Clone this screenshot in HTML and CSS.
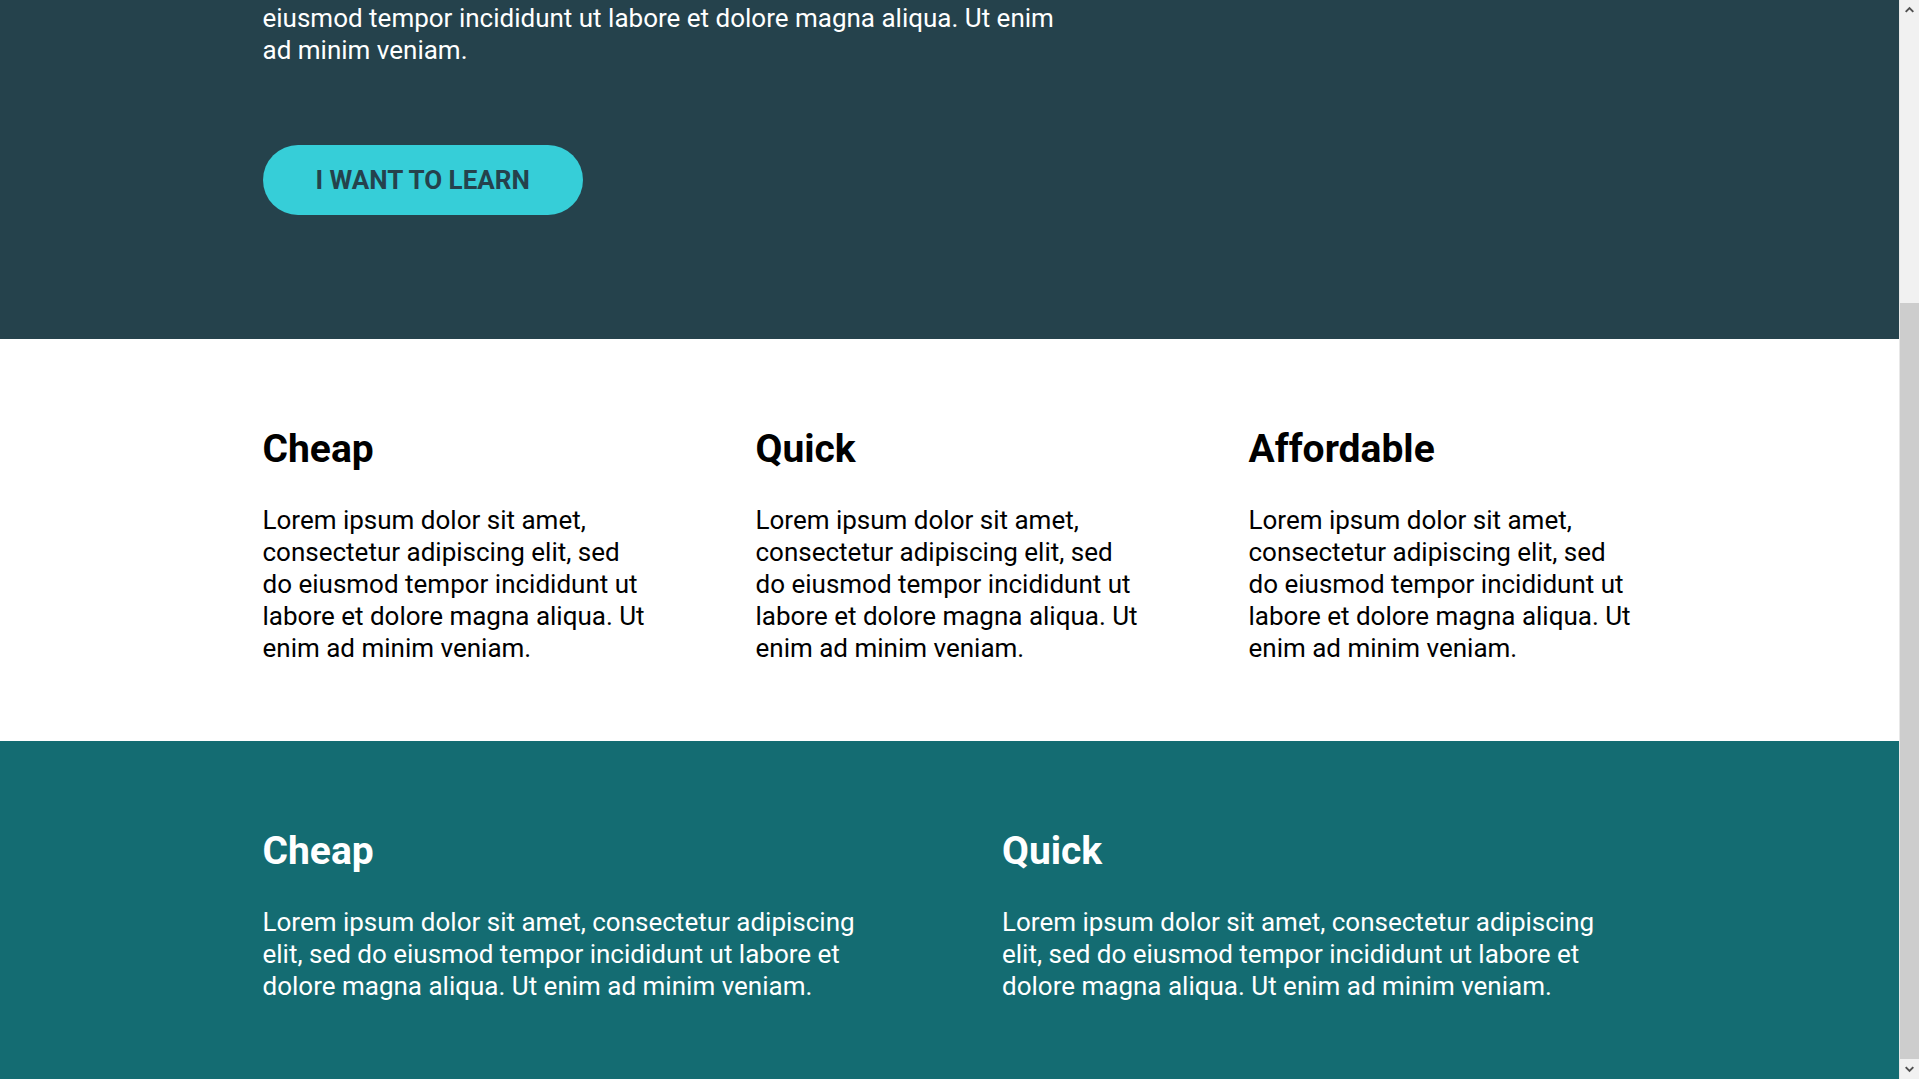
FILE: index.html
```html
<!DOCTYPE html>
<html lang="en">
<head>
<meta charset="utf-8">
<title>Learn</title>
<link rel="stylesheet" href="styles.css">
</head>
<body>
<header class="hero">
  <div class="container">
    <h1 class="hero-title">Learn to code</h1>
    <p class="hero-text">Lorem ipsum dolor sit amet, consectetur adipiscing elit, sed do eiusmod tempor incididunt ut labore et dolore magna aliqua. Ut enim ad minim veniam.</p>
    <a class="btn" href="#">I WANT TO LEARN</a>
  </div>
</header>
<section class="features">
  <div class="container grid-3">
    <div class="feature">
      <h2>Cheap</h2>
      <p>Lorem ipsum dolor sit amet, consectetur adipiscing elit, sed do eiusmod tempor incididunt ut labore et dolore magna aliqua. Ut enim ad minim veniam.</p>
    </div>
    <div class="feature">
      <h2>Quick</h2>
      <p>Lorem ipsum dolor sit amet, consectetur adipiscing elit, sed do eiusmod tempor incididunt ut labore et dolore magna aliqua. Ut enim ad minim veniam.</p>
    </div>
    <div class="feature">
      <h2>Affordable</h2>
      <p>Lorem ipsum dolor sit amet, consectetur adipiscing elit, sed do eiusmod tempor incididunt ut labore et dolore magna aliqua. Ut enim ad minim veniam.</p>
    </div>
  </div>
</section>
<section class="features features-dark">
  <div class="container grid-2">
    <div class="feature">
      <h2>Cheap</h2>
      <p>Lorem ipsum dolor sit amet, consectetur adipiscing elit, sed do eiusmod tempor incididunt ut labore et dolore magna aliqua. Ut enim ad minim veniam.</p>
    </div>
    <div class="feature">
      <h2>Quick</h2>
      <p>Lorem ipsum dolor sit amet, consectetur adipiscing elit, sed do eiusmod tempor incididunt ut labore et dolore magna aliqua. Ut enim ad minim veniam.</p>
    </div>
  </div>
</section>
<div class="scrollbar" aria-hidden="true">
  <div class="sb-arrow">
    <svg width="20" height="20" viewBox="0 0 20 20"><path d="M6 12 L10 8 L14 12" fill="none" stroke="#505050" stroke-width="2"/></svg>
  </div>
  <div class="sb-track">
    <div class="sb-thumb"></div>
  </div>
  <div class="sb-arrow">
    <svg width="20" height="20" viewBox="0 0 20 20"><path d="M6 8 L10 12 L14 8" fill="none" stroke="#505050" stroke-width="2"/></svg>
  </div>
</div>
<script src="script.js"></script>
</body>
</html>
```

FILE: styles.css
```css
* { box-sizing: border-box; }
html, body { margin: 0; padding: 0; }
body {
  font-family: Roboto, "Liberation Sans", sans-serif;
  color: #000;
  background: #fff;
  padding-right: 20px;
}
.container {
  width: 1374px;
  margin: 0 auto;
}
.hero {
  background: #25424c;
  color: #fff;
  padding: 120px 0 124px;
}
.hero-title {
  font-size: 64px;
  font-weight: 700;
  margin: 0 0 40px;
}
.hero-text {
  font-size: 26px;
  line-height: 32px;
  max-width: 810px;
  margin: 0 0 79px;
}
.btn {
  display: inline-block;
  background: #36ced8;
  color: #25424c;
  font-size: 26px;
  font-weight: 700;
  text-decoration: none;
  padding: 20px 53px;
  border-radius: 40px;
}
.features {
  padding: 87px 0 77px;
}
.features-dark {
  background: #146c72;
  color: #fff;
}
.grid-3 {
  display: grid;
  grid-template-columns: repeat(3, 1fr);
  column-gap: 105px;
}
.grid-2 {
  display: grid;
  grid-template-columns: repeat(2, 1fr);
  column-gap: 105px;
}
.feature h2 {
  font-size: 39px;
  font-weight: 700;
  margin: 0 0 32px;
}
.feature p {
  font-size: 26px;
  line-height: 32px;
  margin: 0;
}
.scrollbar {
  position: fixed;
  top: 0;
  right: 0;
  bottom: 0;
  width: 20px;
  background: #f1f1f1;
  border-left: 1px solid #e8e8e8;
  display: flex;
  flex-direction: column;
}
.sb-arrow {
  height: 20px;
  flex: none;
  display: flex;
  align-items: center;
  justify-content: center;
}
.sb-arrow svg { display: block; }
.sb-track {
  flex: 1;
  display: flex;
  flex-direction: column;
  justify-content: flex-end;
}
.sb-thumb {
  height: 756px;
  background: #cdcdcd;
}
```

FILE: script.js
```js
window.scrollTo(0, document.documentElement.scrollHeight);
```
